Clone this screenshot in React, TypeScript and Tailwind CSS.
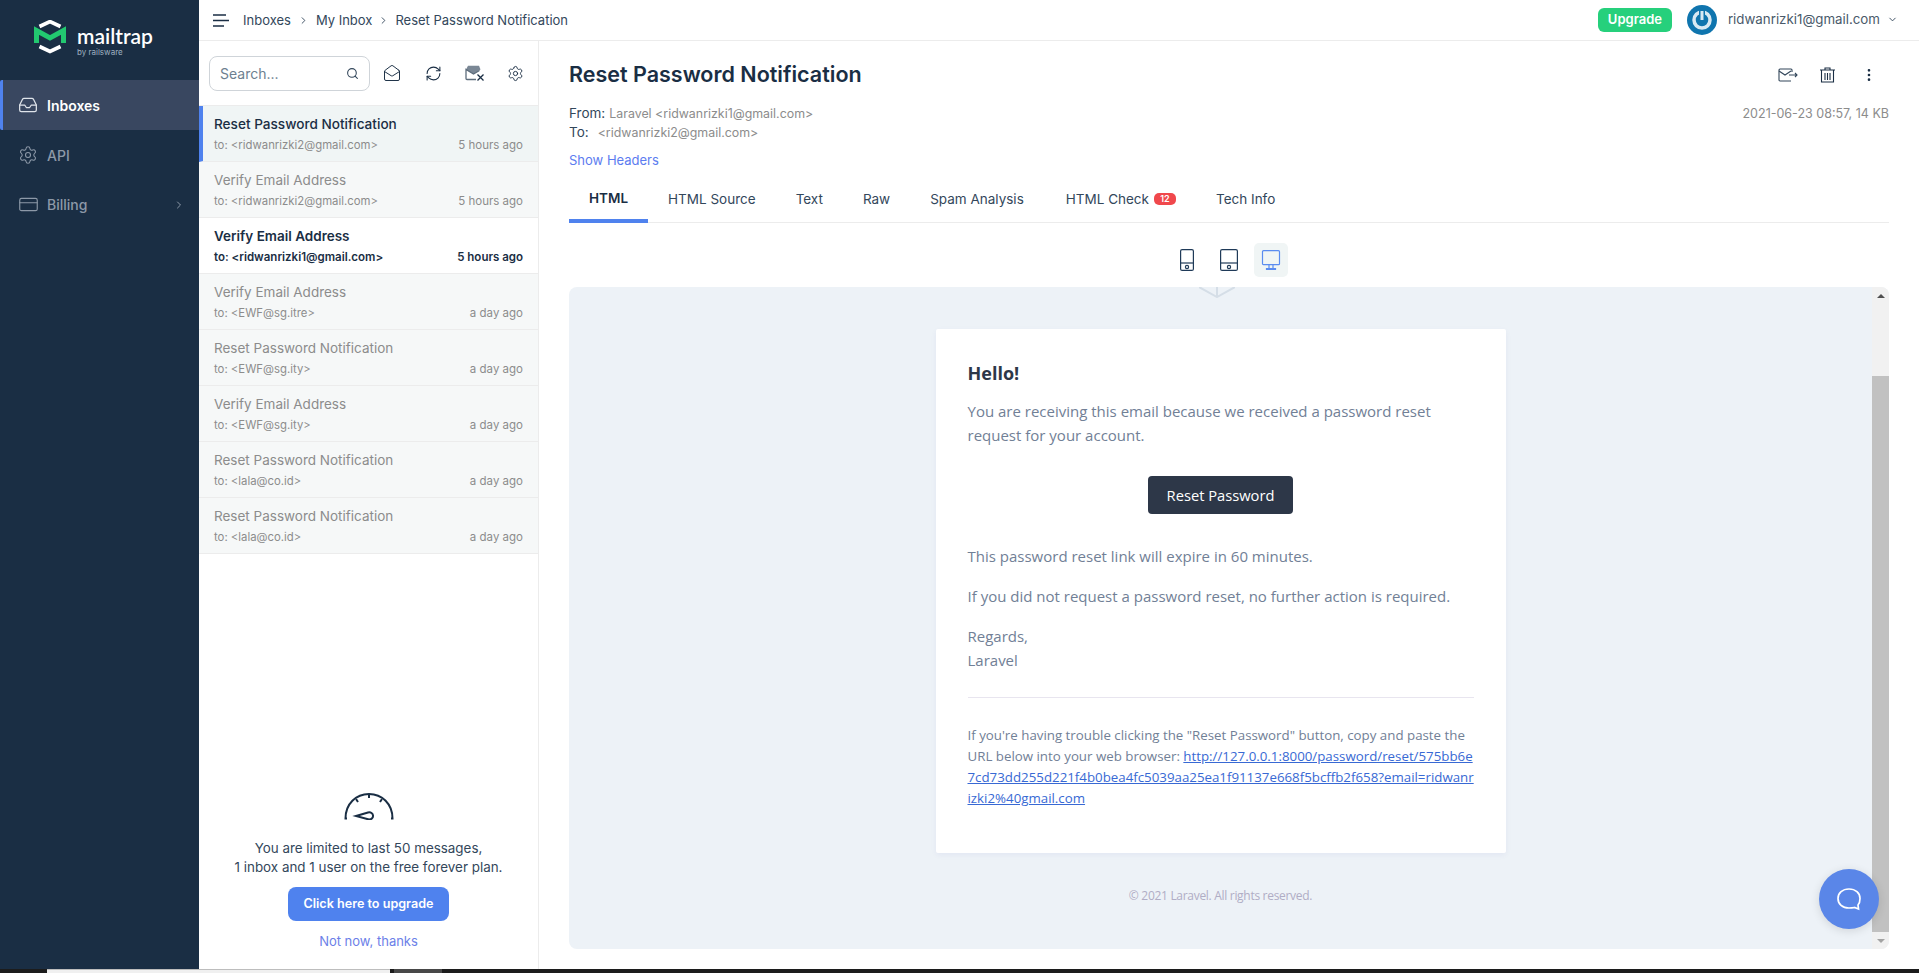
import { ChevronDown, ChevronRight, CreditCard, EllipsisVertical, Inbox, MailOpen, RefreshCw, Search, Settings } from "lucide-react";

const inter = "font-['Inter',sans-serif]";

const messages = [
  { title: "Reset Password Notification", to: "to: <ridwanrizki2@gmail.com>", time: "5 hours ago", state: "active" },
  { title: "Verify Email Address", to: "to: <ridwanrizki2@gmail.com>", time: "5 hours ago", state: "read" },
  { title: "Verify Email Address", to: "to: <ridwanrizki1@gmail.com>", time: "5 hours ago", state: "unread" },
  { title: "Verify Email Address", to: "to: <EWF@sg.itre>", time: "a day ago", state: "read" },
  { title: "Reset Password Notification", to: "to: <EWF@sg.ity>", time: "a day ago", state: "read" },
  { title: "Verify Email Address", to: "to: <EWF@sg.ity>", time: "a day ago", state: "read" },
  { title: "Reset Password Notification", to: "to: <lala@co.id>", time: "a day ago", state: "read" },
  { title: "Reset Password Notification", to: "to: <lala@co.id>", time: "a day ago", state: "read" },
];

const tabs = ["HTML", "HTML Source", "Text", "Raw", "Spam Analysis", "HTML Check", "Tech Info"];

const Logo = () => (
  <svg width="34" height="34" viewBox="0 0 34 34" fill="none">
    <path d="M6.5 6.5 L17 1.5 L27.5 6.5" stroke="#fff" strokeWidth="3.6" />
    <path d="M6.5 26.5 L17 31.5 L27.5 26.5" stroke="#fff" strokeWidth="3.6" />
    <path d="M3.5 23 V10.5 L17 18 L30.5 10.5 V23" stroke="#22c870" strokeWidth="5" />
  </svg>
);

const Sidebar = () => (
  <aside className="w-[199px] shrink-0 bg-[#1a2e44] flex flex-col">
    <div className="h-[80px] flex pl-[33px] pt-[20px] gap-[10px]">
      <Logo />
      <div className="flex flex-col">
        <span className="font-['Lato',sans-serif] text-[21px] leading-[22px] mt-[5px] font-semibold text-white">mailtrap</span>
        <span className="text-[8px] leading-[8px] mt-[1px] text-[#9fb0c0]">by railsware</span>
      </div>
    </div>
    <div className="h-[50px] flex items-center bg-[#394760] border-l-[3px] border-[#4f82ee] rounded-l-[2px] pl-[15px] gap-[9px]">
      <Inbox size={20} strokeWidth={1.5} className="text-[#dfe4ea]" />
      <span className="text-[14px] font-semibold text-white">Inboxes</span>
    </div>
    <div className="h-[50px] flex items-center pl-[18px] gap-[9px] text-[#8d99a8]">
      <Settings size={20} strokeWidth={1.3} />
      <span className="text-[14px] font-medium">API</span>
    </div>
    <div className="h-[49px] flex items-center pl-[18px] pr-[14px] gap-[8px] text-[#8d99a8]">
      <CreditCard size={21} strokeWidth={1.3} />
      <span className="text-[14px] font-medium flex-1">Billing</span>
      <ChevronRight size={12} />
    </div>
  </aside>
);

const Header = () => (
  <header className="h-[41px] shrink-0 border-b border-[#ececec] flex items-center text-[13px] text-[#33475b] pl-[14px] pr-[21px]">
    <svg width="16" height="13" viewBox="0 0 16 13" className="mr-[14px]">
      <path d="M0 1h13M0 6.5h16M0 12h11" stroke="#1a2e44" strokeWidth="1.6" />
    </svg>
    <div className="flex items-center mt-[1px]">
      <span>Inboxes</span>
      <ChevronRight size={11} className="mx-[7px]" />
      <span>My Inbox</span>
      <ChevronRight size={11} className="mx-[6px]" />
      <span>Reset Password Notification</span>
    </div>
    <div className="flex-1" />
    <button className="w-[74px] h-[24px] rounded-[6px] bg-[#26d07c] text-white text-[13px] font-semibold">Upgrade</button>
    <svg width="30" height="30" viewBox="0 0 30 30" className="ml-[15px] mr-[11px]">
      <circle cx="15" cy="15" r="15" fill="#0f75ae" />
      <circle cx="15" cy="15" r="8" fill="none" stroke="#d7e9f3" strokeWidth="3.5" />
      <path d="M15 5v10" stroke="#0f75ae" strokeWidth="6" />
      <path d="M15 6v9" stroke="#d7e9f3" strokeWidth="3" />
    </svg>
    <span className="text-[13.3px] text-[#4a5a6a]">ridwanrizki1@gmail.com</span>
    <ChevronDown size={11} className="ml-[7px] mb-[2px]" />
  </header>
);

const MailXIcon = () => (
  <svg width="20" height="17" viewBox="0 0 20 17" fill="none">
    <path d="M3 .8h11l1.5 3.7L8.5 9 1 4.5z" fill="#7a8795" />
    <path d="M11 14.5H2a1 1 0 0 1-1-1V4.5L8.5 9l6-3.5" stroke="#5d6c7b" strokeWidth="1.3" />
    <path d="M12.5 9.5l6 6M18.500 9.500l-6 6" stroke="#1a2e44" strokeWidth="1.3" />
  </svg>
);

const MessageList = () => (
  <section className="w-[340px] shrink-0 border-r border-[#ececec] flex flex-col">
    <div className="h-[65px] shrink-0 flex items-center pl-[10px] border-b border-[#ececec]">
      <div className="w-[161px] h-[35px] border border-[#cfd4d9] rounded-[8px] flex items-center justify-between pl-[10px] pr-[10px]">
        <span className="text-[14px] text-[#6e7f90]">Search...</span>
        <Search size={13} className="text-[#33475b]" />
      </div>
      <MailOpen size={18} strokeWidth={1.3} className="ml-[13px] text-[#1a2e44]" />
      <RefreshCw size={17} strokeWidth={1.5} className="ml-[24px] text-[#1a2e44]" />
      <div className="ml-[23px]"><MailXIcon /></div>
      <Settings size={17} strokeWidth={1.3} className="ml-[22px] text-[#1a2e44]" />
    </div>
    <div>
      {messages.map((m, i) => (
        <div
          key={i}
          className={
            "h-[56px] border-b border-[#ececec] pr-[15px] flex flex-col justify-center " +
            (m.state === "active"
              ? "bg-[#f0f5f5] border-l-[4px] border-l-[#4f82ee] pl-[11px]"
              : m.state === "read"
                ? "bg-[#f6f8f8] pl-[15px]"
                : "bg-white pl-[15px]")
          }
        >
          <div
            className={
              "leading-[20px] " +
              (m.state === "active"
                ? "text-[13.6px] font-medium text-[#1a2e44]"
                : m.state === "unread"
                  ? "text-[13.5px] font-semibold text-[#1a2e44]"
                  : "text-[13.5px] text-[#8c8c8c]")
            }
          >
            {m.title}
          </div>
          <div
            className={
              "flex justify-between items-baseline text-[11.5px] leading-[18px] mt-[2px] " +
              (m.state === "unread" ? "font-semibold text-[#1a2e44]" : "text-[#8c8c8c]")
            }
          >
            <span className={m.state === "unread" ? "" : "text-[11.35px]"}>{m.to}</span>
            <span>{m.time}</span>
          </div>
        </div>
      ))}
    </div>
    <div className="flex-1" />
    <div className="flex flex-col items-center pb-[18px]">
      <svg width="52" height="28" viewBox="0 0 52 28" fill="none" stroke="#1a2e44" strokeWidth="2">
        <path d="M4 26.500H2.500C2.500 12 13 2 26 2s23.500 10 23.500 24.500H48" />
        <path d="M26 2v4M13 7l2 3M39 7l-2 3" />
        <path d="M13 24l12-3.500c6-1.500 7 7 1 7z" />
      </svg>
      <p className="text-[13.4px] leading-[19px] text-center text-[#33475b] mt-[19px]">
        You are limited to last 50 messages,
        <br />1 inbox and 1 user on the free forever plan.
      </p>
      <button className="mt-[10px] w-[161px] h-[34px] rounded-[8px] bg-[#4f82ee] text-white text-[12.6px] font-semibold">
        Click here to upgrade
      </button>
      <a className="mt-[10px] text-[13px] leading-[20px] text-[#6c7fe8]">Not now, thanks</a>
    </div>
  </section>
);

const PhoneIcon = ({ w, h, color }: { w: number; h: number; color: string }) => (
  <svg width={w} height={h} viewBox={`0 0 ${w} ${h}`} fill="none" stroke={color} strokeWidth="1.2">
    <rect x="0.6" y="0.6" width={w - 1.2} height={h - 1.2} rx="1.5" />
    <path d={`M0.6 ${h - 8}H${w - 0.6}`} />
    <circle cx={w / 2} cy={h - 4} r="1.6" />
  </svg>
);

const EmailBody = () => (
  <div className="relative flex-1 overflow-hidden font-['Open_Sans',sans-serif] pt-[42px]">
    <svg width="36" height="11" viewBox="0 0 36 11" fill="none" stroke="#d5dee7" strokeWidth="2" className="absolute left-[630px] top-0">
      <path d="M0 0l18 10L36 0M18 0v10" />
    </svg>
    <div className="w-[570px] h-[524px] mx-auto bg-white rounded-[2px] shadow-[0_2px_6px_rgba(0,0,150,0.05)] p-[32px] text-[#718096]">
      <h1 className="text-[18px] leading-[24px] font-bold text-[#2d3748] mb-[14px]">Hello!</h1>
      <p className="text-[15px] leading-[24px]">
        You are receiving this email because we received a password reset request for your account.
      </p>
      <div className="flex justify-center mt-[29px] mb-[30px]">
        <button className="w-[145px] h-[38px] rounded-[4px] bg-[#2d3748] text-white text-[14.7px]">Reset Password</button>
      </div>
      <p className="text-[15px] leading-[24px] mb-[16px]">This password reset link will expire in 60 minutes.</p>
      <p className="text-[15px] leading-[24px] mb-[16px]">If you did not request a password reset, no further action is required.</p>
      <p className="text-[15px] leading-[24px]">
        Regards,
        <br />
        Laravel
      </p>
      <div className="border-t border-[#e8e5ef] mt-[25px] pt-[27px] text-[13.3px] leading-[21px] whitespace-nowrap">
        <div>If you're having trouble clicking the "Reset Password" button, copy and paste the</div>
        <div>
          URL below into your web browser: <a className="text-[#3869d4] underline">http://127.0.0.1:8000/password/reset/575bb6e</a>
        </div>
        <div><a className="text-[#3869d4] underline">7cd73dd255d221f4b0bea4fc5039aa25ea1f91137e668f5bcffb2f658?email=ridwanr</a></div>
        <div><a className="text-[#3869d4] underline">izki2%40gmail.com</a></div>
      </div>
    </div>
    <p className="text-center text-[12px] tracking-[-0.3px] text-[#b0adc5] mt-[34px]">© 2021 Laravel. All rights reserved.</p>
  </div>
);

const Scrollbar = () => (
  <div className="w-[17px] bg-[#f1f1f1] flex flex-col items-center">
    <div className="h-[17px] shrink-0 flex items-center justify-center">
      <div className="border-x-[4px] border-x-transparent border-b-[4px] border-b-[#505050]" />
    </div>
    <div className="h-[72px] shrink-0" />
    <div className="w-full flex-1 bg-[#c1c1c1]" />
    <div className="h-[17px] shrink-0 flex items-center justify-center">
      <div className="border-x-[4px] border-x-transparent border-t-[4px] border-t-[#a3a3a3]" />
    </div>
  </div>
);

const Detail = () => (
  <section className="flex-1 flex flex-col pl-[30px] pr-[30px] min-w-0 relative">
    <div className="flex items-center justify-between h-[66px] pt-[1px]">
      <h1 className="text-[21.5px] font-semibold text-[#1a2e44]">Reset Password Notification</h1>
      <div className="flex items-center gap-[22px] pr-[12px] text-[#1a2e44]">
        <svg width="20" height="14" viewBox="0 0 20 14" fill="none" stroke="#33475b" strokeWidth="1.1">
          <path d="M13 13H2a1 1 0 0 1-1-1V2a1 1 0 0 1 1-1h11a1 1 0 0 1 1 1v2" />
          <path d="M1 3l6 4 6-4M11 7h8M17 5l2 2-2 2" />
        </svg>
        <svg width="15" height="16" viewBox="0 0 15 16" fill="none" stroke="#1a2e44" strokeWidth="1.1">
          <path d="M0 3h15M5 3V1h5v2M1.500 3v12h12V3M5 6v7M7.500 6v7M10 6v7" />
        </svg>
        <EllipsisVertical size={16} className="ml-[4px]" />
      </div>
    </div>
    <div className="flex justify-between text-[12.4px] leading-[19px] text-[#8c8c8c] mt-[-3px]">
      <div>
        <div><span className="text-[#33475b] text-[13.5px] mr-[4px]">From:</span>Laravel &lt;ridwanrizki1@gmail.com&gt;</div>
        <div><span className="text-[#33475b] text-[13.5px] mr-[9px]">To:</span>&lt;ridwanrizki2@gmail.com&gt;</div>
      </div>
      <div className="text-[12.5px]">2021-06-23 08:57, 14 KB</div>
    </div>
    <a className="text-[13px] leading-[20px] text-[#5c7cf0] mt-[8px]">Show Headers</a>
    <div className="flex h-[49px] mt-[4px] border-b border-[#ececec] text-[13.5px] text-[#33475b]">
      {tabs.map((t, i) => (
        <div
          key={t}
          className={
            "pl-[20px] flex items-center gap-[5px] " +
            (t === "Spam Analysis" ? "pr-[22px] " : "pr-[20px] ") +
            (i === 0 ? "border-b-[4px] border-[#4f82ee] rounded-t-[3px] mb-[-1px] font-semibold text-[#1a2e44] pt-[4px]" : "pt-[2px]")
          }
        >
          {t}
          {t === "HTML Check" && (
            <span className="bg-[#f0484c] text-white text-[9px] leading-[12px] font-semibold rounded-[5px] w-[22px] text-center">12</span>
          )}
        </div>
      ))}
    </div>
    <div className="h-[64px] flex items-start justify-center pl-[10px] pt-[20px]">
      <div className="mt-[6px]"><PhoneIcon w={14} h={22} color="#1f3a58" /></div>
      <div className="mt-[6px] ml-[26px]"><PhoneIcon w={18} h={22} color="#1f3a58" /></div>
      <div className="ml-[16px] w-[34px] h-[34px] rounded-[5px] bg-[#f0f5f5] flex items-center justify-center">
        <svg width="20" height="20" viewBox="0 0 20 20" fill="none" stroke="#5a8cf0" strokeWidth="1.2">
          <rect x="1.500" y="0.700" width="17" height="14" rx="1" />
          <path d="M8 15v3M12 15v3M5.500 18.500h9v1h-9z" />
        </svg>
      </div>
    </div>
    <div className="h-[662px] flex bg-[#edf2f7] rounded-[8px] overflow-hidden">
      <EmailBody />
      <Scrollbar />
    </div>
    <div className="absolute right-[40px] top-[828px] w-[60px] h-[60px] rounded-full bg-[#5a86e8] shadow-[0_2px_10px_rgba(0,0,0,0.12)] flex items-center justify-center">
      <svg width="24" height="23" viewBox="0 0 24 23" fill="none" stroke="#fff" strokeWidth="1.7">
        <path d="M12 1C5.500 1 1 5 1 10.500S5.500 20 12 20c2 0 4-.2 5.500-.5l4 1.500-.5-4c1.500-1.500 2-4 2-6.500C23 5 18.500 1 12 1z" />
      </svg>
    </div>
  </section>
);

export default function App() {
  return (
    <div className={`h-[973px] w-[1919px] flex flex-col overflow-hidden bg-white ${inter}`}>
      <div className="h-[969px] flex min-h-0">
        <Sidebar />
        <div className="flex-1 flex flex-col min-w-0">
          <Header />
          <div className="flex-1 flex min-h-0">
            <MessageList />
            <Detail />
          </div>
        </div>
      </div>
      <div className="h-[4px] bg-[#1c1c1c] flex">
        <div className="w-[47px]" />
        <div className="w-[343px] bg-[#f0f0f0] border-t border-[#bdbdbd]" />
        <div className="w-[4px]" />
        <div className="w-[48px] bg-[#484848]" />
      </div>
    </div>
  );
}
